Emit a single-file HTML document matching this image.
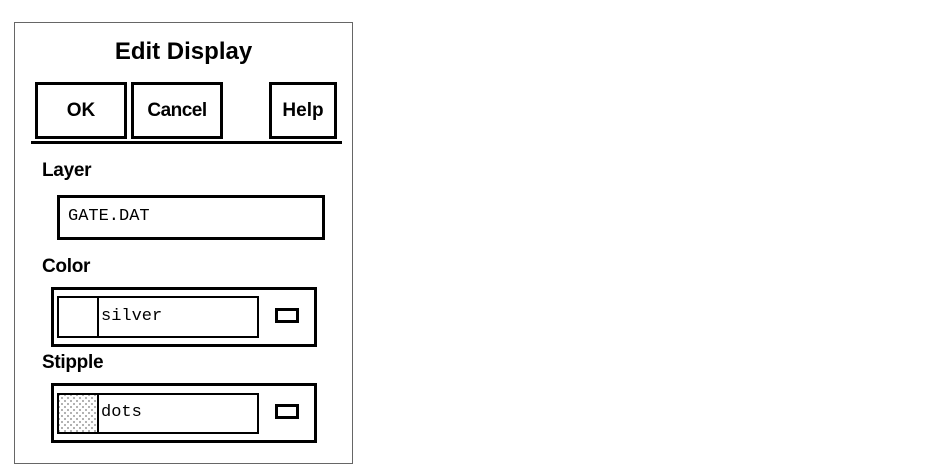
<!DOCTYPE html>
<html><head><style>
body{margin:0;width:950px;height:475px;background:#fff;position:relative;overflow:hidden;font-family:"Liberation Sans",sans-serif;}
.a{position:absolute;box-sizing:border-box;}
.b{border:3px solid #000;}
.lbl{position:absolute;font-weight:bold;font-size:19px;color:#000;letter-spacing:-0.3px;}
.btn{display:flex;align-items:center;justify-content:center;font-weight:bold;font-size:19px;}
.mono{font-family:"Liberation Mono",monospace;font-size:17px;}
</style></head><body>
<div class="a" style="left:14px;top:22px;width:339px;height:442px;border:1px solid #666;"></div>
<div class="a" style="left:14px;top:38px;width:339px;text-align:center;font-weight:bold;font-size:24px;">Edit Display</div>
<div class="a b btn" style="left:35px;top:82px;width:92px;height:57px;">OK</div>
<div class="a b btn" style="left:131px;top:82px;width:92px;height:57px;letter-spacing:-0.5px;">Cancel</div>
<div class="a b btn" style="left:269px;top:82px;width:68px;height:57px;">Help</div>
<div class="a" style="left:31px;top:141px;width:311px;height:3px;background:#000;"></div>
<div class="lbl" style="left:42px;top:160px;">Layer</div>
<div class="a b mono" style="left:57px;top:195px;width:268px;height:45px;padding:9px 0 0 8px;">GATE.DAT</div>
<div class="lbl" style="left:42px;top:256px;">Color</div>
<div class="a b" style="left:51px;top:287px;width:266px;height:60px;"></div>
<div class="a" style="left:57px;top:296px;width:202px;height:42px;border:2px solid #000;"></div>
<div class="a" style="left:97px;top:296px;width:2px;height:42px;background:#000;"></div>
<div class="a mono" style="left:101px;top:307px;">silver</div>
<div class="a b" style="left:275px;top:308px;width:24px;height:15px;"></div>
<div class="lbl" style="left:42px;top:352px;">Stipple</div>
<div class="a b" style="left:51px;top:383px;width:266px;height:60px;"></div>
<div class="a" style="left:57px;top:393px;width:202px;height:41px;border:2px solid #000;"></div>
<div class="a" style="left:59px;top:395px;width:38px;height:37px;background-image:radial-gradient(#000 0.7px,transparent 0.8px),radial-gradient(#000 0.7px,transparent 0.8px);background-size:6px 6px;background-position:0 0,3px 3px;"></div>
<div class="a" style="left:97px;top:393px;width:2px;height:41px;background:#000;"></div>
<div class="a mono" style="left:101px;top:403px;">dots</div>
<div class="a b" style="left:275px;top:404px;width:24px;height:15px;"></div>
</body></html>
